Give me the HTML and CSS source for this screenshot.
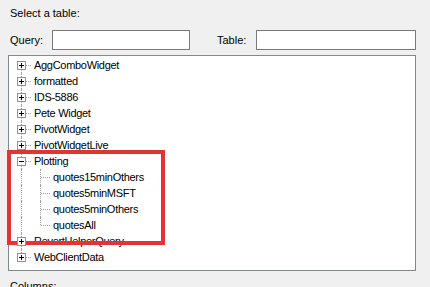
FILE: index.html
```html
<!DOCTYPE html>
<html>
<head>
<meta charset="utf-8">
<link rel="stylesheet" href="styles.css">
</head>
<body>
<div class="page">
  <div class="title">Select a table:</div>
  <div class="filters">
    <label class="lbl">Query:</label>
    <div class="input query"></div>
    <label class="lbl table-lbl">Table:</label>
    <div class="input table"></div>
  </div>
  <div class="tree">
    <div class="row"><span class="cell first"><span class="exp plus"></span></span><span class="txt">AggComboWidget</span></div>
    <div class="row"><span class="cell tee"><span class="exp plus"></span></span><span class="txt">formatted</span></div>
    <div class="row"><span class="cell tee"><span class="exp plus"></span></span><span class="txt">IDS-5886</span></div>
    <div class="row"><span class="cell tee"><span class="exp plus"></span></span><span class="txt">Pete Widget</span></div>
    <div class="row"><span class="cell tee"><span class="exp plus"></span></span><span class="txt">PivotWidget</span></div>
    <div class="row"><span class="cell tee"><span class="exp plus"></span></span><span class="txt">PivotWidgetLive</span></div>
    <div class="row"><span class="cell tee"><span class="exp minus"></span></span><span class="txt">Plotting</span></div>
    <div class="row"><span class="cell vert"></span><span class="cell tee"></span><span class="txt">quotes15minOthers</span></div>
    <div class="row"><span class="cell vert"></span><span class="cell tee"></span><span class="txt">quotes5minMSFT</span></div>
    <div class="row"><span class="cell vert"></span><span class="cell tee"></span><span class="txt">quotes5minOthers</span></div>
    <div class="row"><span class="cell vert"></span><span class="cell last"></span><span class="txt">quotesAll</span></div>
    <div class="row"><span class="cell tee"><span class="exp plus"></span></span><span class="txt">RevertHelperQuery</span></div>
    <div class="row"><span class="cell last"><span class="exp plus"></span></span><span class="txt">WebClientData</span></div>
  </div>
  <div class="columns">Columns:</div>
</div>
<div class="highlight"></div>
</body>
</html>
```

FILE: styles.css
```css
html, body {
  margin: 0;
  padding: 0;
  background: #f0f0f0;
  overflow: hidden;
}
body {
  font-family: "Liberation Sans", Arial, sans-serif;
  font-size: 11px;
  color: #000;
  position: relative;
  width: 430px;
  height: 287px;
}
.page {
  padding: 6px 0 0 8px;
}
.title {
  height: 14px;
  line-height: 14px;
  padding-left: 2px;
}
.filters {
  display: flex;
  align-items: center;
  margin-top: 10px;
  height: 20px;
}
.lbl {
  padding-left: 2px;
  width: 42px;
}
.table-lbl {
  margin-left: 25px;
  width: 39px;
}
.input {
  box-sizing: border-box;
  height: 20px;
  background: #fff;
  border: 1px solid #7a7a7a;
}
.query { width: 138px; }
.table { width: 160px; }
.tree {
  box-sizing: border-box;
  margin-top: 5px;
  width: 408px;
  height: 216px;
  background: #fff;
  border: 1px solid #828790;
  padding: 1px 0 0 3px;
}
.row {
  display: flex;
  height: 16px;
  align-items: center;
}
.cell {
  position: relative;
  flex: none;
  width: 19px;
  height: 16px;
}
.cell::before, .cell::after {
  content: "";
  position: absolute;
}
.vert::before, .tee::before {
  left: 9px;
  top: 0;
  height: 16px;
  border-left: 1px dotted #a0a0a0;
}
.first::before {
  left: 9px;
  top: 8px;
  height: 8px;
  border-left: 1px dotted #a0a0a0;
}
.last::before {
  left: 9px;
  top: 0;
  height: 8px;
  border-left: 1px dotted #a0a0a0;
}
.tee::after, .first::after, .last::after {
  left: 10px;
  top: 8px;
  width: 9px;
  border-top: 1px dotted #a0a0a0;
}
.exp {
  position: absolute;
  z-index: 1;
  left: 5px;
  top: 4px;
  width: 9px;
  height: 9px;
  box-sizing: border-box;
  background: #fff;
  border: 1px solid #919191;
}
.exp::before {
  content: "";
  position: absolute;
  left: 1px;
  top: 3px;
  width: 5px;
  height: 1px;
  background: #000;
}
.plus::after {
  content: "";
  position: absolute;
  left: 3px;
  top: 1px;
  width: 1px;
  height: 5px;
  background: #000;
}
.txt {
  padding-left: 3px;
  line-height: 16px;
  white-space: nowrap;
  letter-spacing: -0.3px;
}
.columns {
  margin-top: 8px;
  padding-left: 2px;
  line-height: 14px;
}
.highlight {
  position: absolute;
  left: 7px;
  top: 150px;
  width: 158px;
  height: 95px;
  box-sizing: border-box;
  border: 4px solid #e03531;
}
```
